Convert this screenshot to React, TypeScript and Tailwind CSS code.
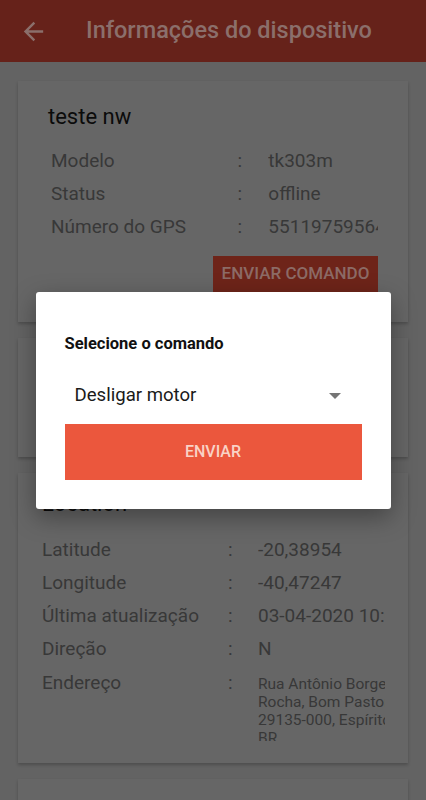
type Row = { label: string; value: string };

const deviceRows: Row[] = [
  { label: 'Modelo', value: 'tk303m' },
  { label: 'Status', value: 'offline' },
  { label: 'Número do GPS', value: '5511975956401' },
];

const locationRows: Row[] = [
  { label: 'Latitude', value: '-20,38954' },
  { label: 'Longitude', value: '-40,47247' },
  { label: 'Última atualização', value: '03-04-2020 10:08:21' },
  { label: 'Direção', value: 'N' },
];

const addressLines = ['Rua Antônio Borges', 'Rocha, Bom Pastor, Viana - ES,', '29135-000, Espírito Santo,', 'BR'];

function InfoRow({ row, labelW, colonW, valueW }: { row: Row; labelW: string; colonW: string; valueW: string }) {
  return (
    <div className="flex h-[33px] items-center text-[19px] text-[#383838]">
      <span className={labelW}>{row.label}</span>
      <span className={colonW}>:</span>
      <span className={`${valueW} overflow-hidden whitespace-nowrap`}>{row.value}</span>
    </div>
  );
}

export default function App() {
  return (
    <div className="relative h-[800px] w-full overflow-hidden bg-[#636363]" style={{ fontFamily: 'Roboto, "Noto Sans", sans-serif' }}>
      {/* toolbar */}
      <div className="flex h-[62px] items-center bg-[#66221a]">
        <svg viewBox="0 0 24 24" className="ml-[19px] h-[29px] w-[29px]" fill="#8b6f6b">
          <path d="M20 11H7.83l5.59-5.59L12 4l-8 8 8 8 1.41-1.41L7.83 13H20v-2z" />
        </svg>
        <h1 className="ml-[38px] text-[23.5px] font-medium text-[#8b6f6b]">Informações do dispositivo</h1>
      </div>

      <div className="flex flex-col gap-4 px-[18px] pt-[19px]">
        {/* device card */}
        <div className="bg-[#666666] px-[30px] pb-[30px] pt-[23px] shadow-[0_2px_3px_rgba(0,0,0,0.22)]">
          <div className="text-[22px] leading-[26px] text-[#0b0b0b]">teste nw</div>
          <div className="mt-[15px] pl-[3px]">
            {deviceRows.map((r) => (
              <InfoRow key={r.label} row={r} labelW="w-[187px]" colonW="w-[31px]" valueW="w-[110px]" />
            ))}
          </div>
          <div className="mt-[12px] flex justify-end">
            <button className="h-[36px] w-[165px] bg-[#6e2419] text-[17px] font-medium text-[#8c6b66]">ENVIAR COMANDO</button>
          </div>
        </div>

        {/* commands card (hidden behind dialog) */}
        <div className="h-[119px] bg-[#666666] shadow-[0_2px_3px_rgba(0,0,0,0.22)]" />

        {/* location card */}
        <div className="bg-[#666666] pb-[22px] pl-[24px] pt-[18px] shadow-[0_2px_3px_rgba(0,0,0,0.22)]">
          <div className="text-[22px] leading-[26px] text-[#0b0b0b]">Location</div>
          <div className="mt-[17px]">
            {locationRows.map((r) => (
              <InfoRow key={r.label} row={r} labelW="w-[186px]" colonW="w-[30px]" valueW="w-[127px]" />
            ))}
            <div className="flex items-start text-[19px] text-[#383838]">
              <span className="w-[186px] leading-[33px]">Endereço</span>
              <span className="w-[30px] leading-[33px]">:</span>
              <div className="mt-[9px] h-[66px] w-[127px] overflow-hidden text-[15.5px] leading-[18px]">
                {addressLines.map((l) => (
                  <div key={l} className="whitespace-nowrap">{l}</div>
                ))}
              </div>
            </div>
          </div>
        </div>

        <div className="h-[120px] bg-[#666666] shadow-[0_2px_3px_rgba(0,0,0,0.22)]" />
      </div>

      {/* dialog */}
      <div className="absolute inset-0 flex items-center justify-center">
        <div className="w-[355px] rounded-[3px] bg-white px-[29px] pb-[29px] pt-[42px] shadow-[0_8px_24px_rgba(0,0,0,0.35)]">
          <div className="text-[16.5px] font-bold leading-[20px] text-[#111]">Selecione o comando</div>
          <div className="mt-[18px] flex h-[48px] items-center justify-between pl-[10px] pr-[21px]">
            <span className="text-[18.6px] text-[#1a1a1a]">Desligar motor</span>
            <svg viewBox="0 0 12 6" className="h-[6px] w-[12px]" fill="#757575">
              <path d="M0 0h12L6 6z" />
            </svg>
          </div>
          <button className="mt-[4px] flex h-[56px] w-full items-center justify-center bg-[#eb573d] text-[16px] font-medium text-[#f9d2c6]">
            ENVIAR
          </button>
        </div>
      </div>
    </div>
  );
}
